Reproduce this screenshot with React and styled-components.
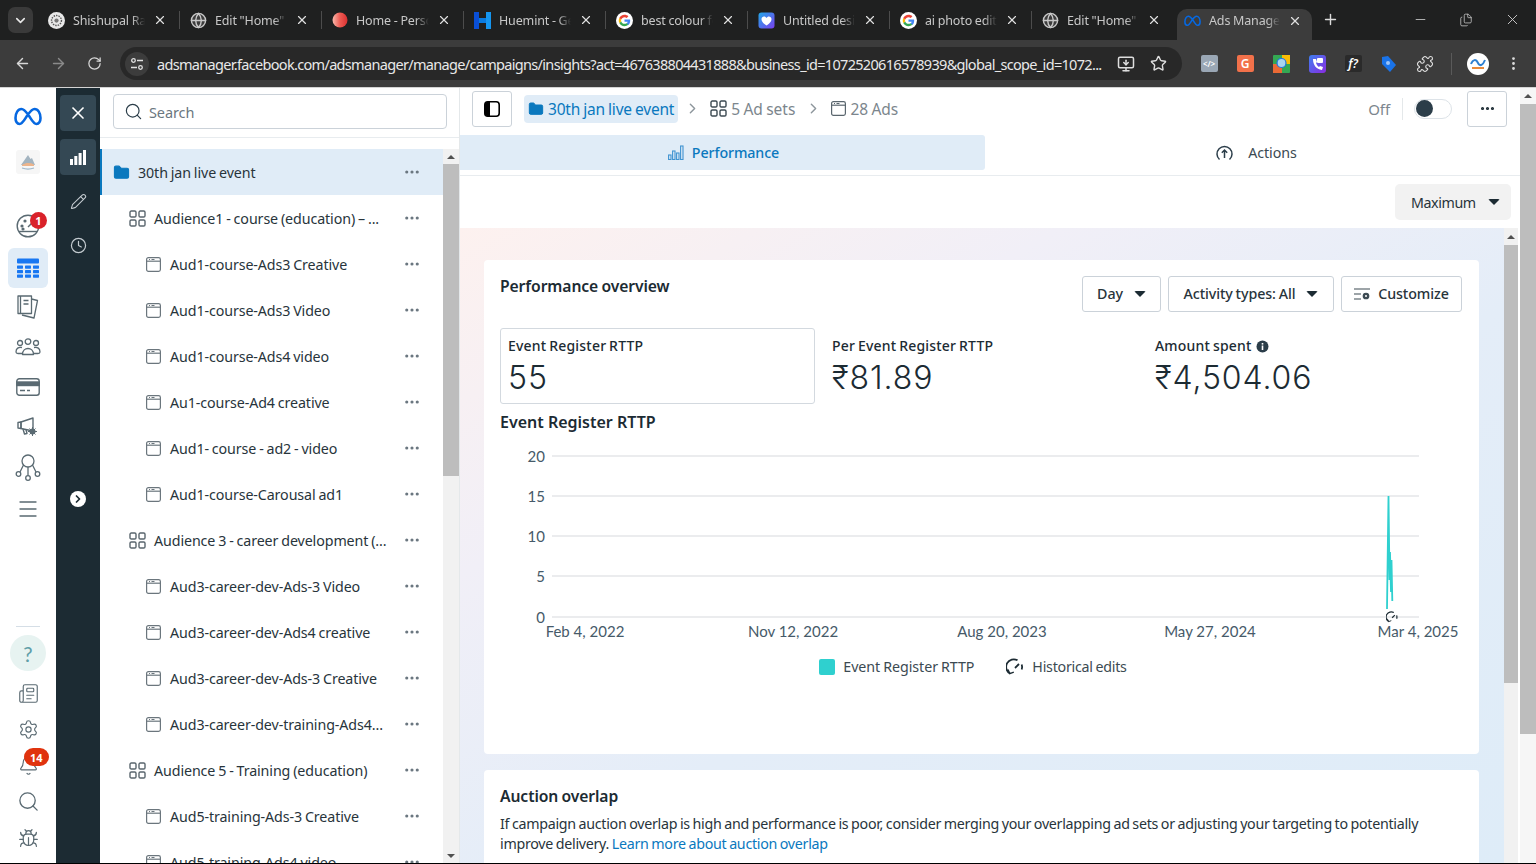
import React from 'react';
import styled, { createGlobalStyle } from 'styled-components';
import {
  X, Search, Pencil, Clock, ChevronRight, ChevronDown, MoreHorizontal, Star, ArrowLeft, ArrowRight,
  RotateCw, Plus, Minus, Menu, Newspaper, Settings, Bell, Bug, Puzzle, MoreVertical, Globe, Folder,
  Files, MonitorDown,
} from 'lucide-react';

const GlobalStyle = createGlobalStyle`
  html, body { margin: 0; padding: 0; background: #fff; overflow: hidden; }
  * { box-sizing: border-box; }
  body {
    font-family: "Noto Sans", "Open Sans", sans-serif;
    color: #1c2b33;
    letter-spacing: -0.1px;
    word-spacing: -0.7px;
  }
`;

const Page = styled.div`
  width: 1536px;
  height: 864px;
  display: flex;
  flex-direction: column;
  overflow: hidden;
  border-bottom: 1px solid #000;
`;

/* browser chrome */
const TabStrip = styled.div`
  height: 40px;
  flex: none;
  background: #1f2020;
  display: flex;
  align-items: flex-end;
  padding-left: 8px;
`;
const TabSearch = styled.div`
  width: 25px;
  height: 26px;
  margin: 0 8px 7px 0;
  border-radius: 7px;
  background: #3a3a3a;
  color: #e8e8e8;
  display: flex;
  align-items: center;
  justify-content: center;
`;
const Tab = styled.div`
  position: relative;
  width: ${p => (p.$active ? 135 : 142)}px;
  height: ${p => (p.$active ? 31 : 32)}px;
  margin-bottom: ${p => (p.$active ? 0 : '4px')};
  padding: 0 ${p => (p.$active ? 10 : 16)}px ${p => (p.$active ? 8 : 0)}px 7px;
  flex: none;
  display: flex;
  align-items: center;
  gap: 8px;
  color: #c8c8c8;
  background: ${p => (p.$active ? '#3c3c3c' : 'transparent')};
  border-radius: 10px 10px 0 0;
  &::after {
    content: '';
    display: ${p => (p.$last ? 'none' : 'block')};
    position: absolute;
    right: 3px;
    top: 7px;
    height: 18px;
    width: 1px;
    background: #4c4c4c;
  }
`;
const TabTitle = styled.span`
  flex: 1;
  min-width: 0;
  font-size: 12.5px;
  letter-spacing: -0.15px;
  word-spacing: -0.3px;
  white-space: nowrap;
  -webkit-mask-image: linear-gradient(90deg, #000 82%, transparent 100%);
  mask-image: linear-gradient(90deg, #000 82%, transparent 100%);
`;
const NewTab = styled.div`
  color: #dcdcdc;
  display: flex;
  margin: 0 0 12px 10px;
`;
const WindowButtons = styled.div`
  margin-left: auto;
  display: flex;
  align-items: center;
  color: #cfcfcf;
  margin-bottom: 12px;
  padding-right: 1px;
`;
const WindowButton = styled.div`
  width: 46px;
  display: flex;
  justify-content: center;
`;
const Toolbar = styled.div`
  height: 47px;
  flex: none;
  background: #3c3c3c;
  display: flex;
  align-items: center;
  padding-left: 4px;
  color: #d8d8d8;
`;
const NavButton = styled.div`
  width: 36px;
  display: flex;
  justify-content: center;
  color: ${p => (p.$dim ? '#8a8a8a' : '#d8d8d8')};
`;
const Omnibox = styled.div`
  width: 1062px;
  height: 33px;
  margin-left: 8px;
  border-radius: 17px;
  background: #282828;
  display: flex;
  align-items: center;
  padding: 0 15px 0 5px;
`;
const SiteBadge = styled.div`
  width: 24px;
  height: 24px;
  border-radius: 50%;
  background: #3c3c3c;
  display: flex;
  align-items: center;
  justify-content: center;
  margin-right: 8px;
  flex: none;
`;
const Url = styled.div`
  flex: 1;
  min-width: 0;
  font-size: 14.5px;
  letter-spacing: -0.68px;
  word-spacing: 0;
  color: #e8e8e8;
  white-space: nowrap;
  overflow: hidden;
`;
const OmniIcons = styled.div`
  display: flex;
  align-items: center;
  gap: 15px;
  margin-left: 12px;
  color: #dedede;
`;
const Extensions = styled.div`
  display: flex;
  align-items: center;
  margin-left: 9px;
`;
const ExtSlot = styled.div`
  width: 36px;
  display: flex;
  justify-content: center;
  align-items: center;
`;
const ExtTile = styled.div`
  width: 17px;
  height: 17px;
  border-radius: 2px;
  background: ${p => p.$bg};
  color: #fff;
  font-size: ${p => p.$size || 11}px;
  font-weight: 600;
  font-style: ${p => (p.$italic ? 'italic' : 'normal')};
  display: flex;
  align-items: center;
  justify-content: center;
`;
const ToolbarDivider = styled.div`
  width: 1px;
  height: 22px;
  margin: 0 15px 0 8px;
  background: #5a5a5a;
`;
const Avatar = styled.div`
  width: 22px;
  height: 22px;
  border-radius: 50%;
  background: #fff;
  margin-right: 16px;
  display: flex;
  align-items: center;
  justify-content: center;
`;

/* page */
const Body = styled.div`
  flex: 1;
  min-height: 0;
  display: flex;
  border-top: 1px solid #d4d4d4;
`;
const Rail = styled.div`
  width: 56px;
  flex: none;
  display: flex;
  flex-direction: column;
  align-items: center;
  color: #5a6a72;
`;
const RailSlot = styled.div`
  position: relative;
  width: 40px;
  height: ${p => p.$h || 40}px;
  margin-top: ${p => p.$mt || 0}px;
  display: flex;
  align-items: center;
  justify-content: center;
  flex: none;
  border-radius: 6px;
  background: ${p => (p.$active ? '#e0ecf7' : 'transparent')};
`;
const RailBottom = styled.div`
  margin-top: auto;
  padding-bottom: 6px;
  display: flex;
  flex-direction: column;
  align-items: center;
`;
const RailRule = styled.div`
  width: 24px;
  height: 1px;
  background: #d5dee6;
  margin-bottom: 8px;
`;
const HelpBubble = styled.div`
  width: 36px;
  height: 36px;
  margin-bottom: 4px;
  border-radius: 50%;
  background: #e7f3f1;
  color: #5f9ea8;
  font-family: Lato, sans-serif;
  font-size: 21px;
  line-height: 1;
  display: flex;
  align-items: center;
  justify-content: center;
`;
const Badge = styled.span`
  position: absolute;
  top: ${p => p.$top}px;
  left: ${p => p.$left}px;
  height: ${p => (p.$wide ? 18 : 17)}px;
  min-width: 17px;
  padding: 0 ${p => (p.$wide ? 6 : 0)}px;
  border-radius: 9px;
  background: ${p => (p.$wide ? '#e0330e' : '#d9222a')};
  color: #fff;
  font-size: 11px;
  font-weight: 700;
  letter-spacing: 0;
  display: flex;
  align-items: center;
  justify-content: center;
`;
const DarkRail = styled.div`
  width: 44px;
  flex: none;
  background: #1c2b33;
  display: flex;
  flex-direction: column;
  align-items: center;
  padding-top: 7px;
  gap: 8px;
  color: #c4cbd0;
`;
const DarkButton = styled.div`
  width: 36px;
  height: 36px;
  border-radius: 4px;
  background: ${p => (p.$on ? '#344854' : 'transparent')};
  color: ${p => (p.$on ? '#fff' : '#c4cbd0')};
  display: flex;
  align-items: center;
  justify-content: center;
`;
const ExpandDot = styled.div`
  width: 16px;
  height: 16px;
  margin-top: 220px;
  border-radius: 50%;
  background: #fff;
  color: #1c2b33;
  display: flex;
  align-items: center;
  justify-content: center;
`;

/* campaign tree */
const TreePanel = styled.div`
  width: 360px;
  flex: none;
  display: flex;
  flex-direction: column;
  border-right: 1px solid #e4e8ea;
`;
const SearchRow = styled.div`
  height: 50px;
  flex: none;
  padding: 6px 12px 0 13px;
  border-bottom: 1px solid #e8ecef;
`;
const SearchBox = styled.div`
  height: 35px;
  border: 1px solid #cbd2d9;
  border-radius: 4px;
  display: flex;
  align-items: center;
  gap: 6px;
  padding-left: 10px;
  font-size: 14.5px;
  color: #6b7780;
`;
const TreeBody = styled.div`
  flex: 1;
  min-height: 0;
  margin-top: 11px;
  display: flex;
`;
const TreeList = styled.div`
  flex: 1;
  min-width: 0;
  overflow: hidden;
`;
const TreeRow = styled.div`
  height: 46px;
  flex: none;
  display: flex;
  align-items: center;
  padding-left: ${p => [11, 29, 46][p.$level]}px;
  padding-right: 22px;
  gap: ${p => [8, 8, 9][p.$level]}px;
  font-size: 14.25px;
  color: #28343b;
  background: ${p => (p.$active ? '#e0ecf7' : 'transparent')};
  border-left: ${p => (p.$active ? '2px solid #0a78be' : '0')};
`;
const TreeLabel = styled.span`
  flex: 1;
  white-space: nowrap;
`;
const RowDots = styled.span`
  display: flex;
  color: #6b7780;
`;
const ScrollTrack = styled.div`
  width: ${p => p.$w}px;
  flex: none;
  background: ${p => p.$bg || '#f1f1f1'};
  display: flex;
  flex-direction: column;
  align-items: center;
`;
const ScrollArrow = styled.div`
  height: ${p => p.$h || 15}px;
  flex: none;
  display: flex;
  align-items: center;
  &::before {
    content: '';
    border-left: 4px solid transparent;
    border-right: 4px solid transparent;
    ${p => (p.$down ? 'border-top' : 'border-bottom')}: 4px solid #505050;
  }
`;
const ScrollThumb = styled.div`
  width: 100%;
  height: ${p => p.$h}px;
  flex: none;
  background: #bdbdbd;
`;
const ScrollFill = styled.div`
  flex: 1;
`;

/* main column */
const Main = styled.div`
  flex: 1;
  min-width: 0;
  display: flex;
  flex-direction: column;
`;
const Header = styled.div`
  height: 47px;
  flex: none;
  display: flex;
  align-items: center;
  padding: 0 13px 6px 12px;
`;
const SquareButton = styled.div`
  width: 40px;
  height: 36px;
  border: 1px solid #cbd2d9;
  border-radius: 3px;
  display: flex;
  align-items: center;
  justify-content: center;
  color: #1c2b33;
`;
const Crumb = styled.div`
  height: 28px;
  display: flex;
  align-items: center;
  gap: 4px;
  padding: 0 4px;
  font-size: 15.500px;
  letter-spacing: ${p => (p.$active ? '-0.2px' : '0')};
  border-radius: 4px;
  color: ${p => (p.$active ? '#0a78be' : '#7c868d')};
  background: ${p => (p.$active ? '#e0ecf7' : 'transparent')};
  margin-left: ${p => p.$ml || 0}px;
`;
const CrumbArrow = styled.span`
  display: flex;
  color: #8d969c;
  margin-left: 6px;
  margin-right: 5px;
`;
const HeaderRight = styled.div`
  margin-left: auto;
  display: flex;
  align-items: center;
`;
const OffLabel = styled.span`
  font-size: 15px;
  color: #7c868d;
  padding-right: 12px;
  border-right: 1px solid #e4e8ea;
  line-height: 22px;
`;
const Toggle = styled.div`
  width: 38px;
  height: 20px;
  margin: 0 15px 0 11px;
  border: 1px solid #dde3e8;
  border-radius: 10px;
  display: flex;
  align-items: center;
  padding-left: 1px;
  &::before {
    content: '';
    width: 17px;
    height: 17px;
    border-radius: 50%;
    background: #2b3d49;
  }
`;
const ViewTabs = styled.div`
  height: 41px;
  flex: none;
  display: flex;
  border-bottom: 1px solid #e8ecef;
  padding-bottom: 5px;
`;
const ViewTab = styled.div`
  width: ${p => (p.$active ? '525px' : 'auto')};
  flex: ${p => (p.$active ? 'none' : 1)};
  display: flex;
  align-items: center;
  justify-content: center;
  gap: ${p => (p.$active ? 8 : 15)}px;
  padding-left: ${p => (p.$active ? '2px' : '8px')};
  font-size: 14.25px;
  font-weight: ${p => (p.$active ? 500 : 400)};
  color: ${p => (p.$active ? '#0a78be' : '#3c4a52')};
  background: ${p => (p.$active ? '#e0ecf7' : 'transparent')};
  border-radius: 0 3px 3px 0;
`;
const FilterRow = styled.div`
  height: 52px;
  flex: none;
  display: flex;
  align-items: center;
  justify-content: flex-end;
  padding-right: 9px;
`;
const GreyDropdown = styled.div`
  width: 116px;
  height: 36px;
  background: #f2f2f2;
  border-radius: 5px;
  display: flex;
  align-items: center;
  justify-content: space-between;
  padding: 0 11px 0 16px;
  font-size: 14.25px;
  letter-spacing: -0.4px;
  color: #28343b;
`;
const Caret = styled.span`
  display: inline-block;
  width: 0;
  height: 0;
  border-left: 6px solid transparent;
  border-right: 6px solid transparent;
  border-top: 6px solid #1c2b33;
  border-radius: 2px;
`;
const ContentRow = styled.div`
  flex: 1;
  min-height: 0;
  display: flex;
  padding-right: 2px;
`;
const Backdrop = styled.div`
  flex: 1;
  min-width: 0;
  padding: 32px 25px 0 24px;
  display: flex;
  flex-direction: column;
  gap: 16px;
  overflow: hidden;
  background: linear-gradient(150deg, #fdf1ef 0%, #f1eff7 28%, #e4edf8 55%, #deecf8 100%);
`;
const Card = styled.div`
  flex: none;
  height: ${p => (p.$h ? `${p.$h}px` : 'auto')};
  background: #fff;
  border-radius: 4px;
  padding: 16px 17px 16px 16px;
`;
const CardHead = styled.div`
  height: 36px;
  display: flex;
  align-items: flex-start;
  justify-content: space-between;
`;
const CardTitle = styled.div`
  font-size: 15.700px;
  font-weight: 600;
  line-height: 20px;
  color: #1c2b33;
`;
const HeadButtons = styled.div`
  display: flex;
  gap: 7px;
`;
const OutlineButton = styled.div`
  height: 36px;
  width: ${p => p.$w}px;
  border: 1px solid #cbd2d9;
  border-radius: 3px;
  display: flex;
  align-items: center;
  justify-content: center;
  gap: ${p => p.$gap || 11}px;
  padding-bottom: 1px;
  font-size: 14.25px;
  font-weight: 500;
  color: #28343b;
`;
const KpiGrid = styled.div`
  margin-top: 16px;
  display: grid;
  grid-template-columns: 315px 314px 1fr;
  gap: 9px;
`;
const Kpi = styled.div`
  height: 76px;
  padding: ${p => (p.$on ? '8px 7px' : '9px 8px')};
  border: ${p => (p.$on ? '1px solid #d3d9df' : '0')};
  border-radius: 3px;
`;
const KpiLabel = styled.div`
  display: flex;
  align-items: center;
  gap: 4px;
  font-size: 14px;
  font-weight: 500;
  line-height: 18px;
  letter-spacing: 0.2px;
  word-spacing: -1px;
  color: #1c2b33;
`;
const KpiValue = styled.div`
  margin-top: 3px;
  font-family: Inter, "Noto Sans", sans-serif;
  font-size: 32px;
  font-weight: 300;
  line-height: 40px;
  letter-spacing: 0.9px;
  color: #1c2b33;
`;
const ChartTitle = styled(CardTitle)`
  margin-top: 8px;
  font-size: 16px;
  letter-spacing: 0;
  word-spacing: 0;
`;
const ChartSvg = styled.svg`
  display: block;
  width: 963px;
  height: 204px;
  margin-top: 8px;
`;
const AxisText = styled.text`
  font-family: Lato, "Open Sans", sans-serif;
  font-size: 15px;
  letter-spacing: 0;
  word-spacing: 0;
  fill: #465a69;
`;
const Legend = styled.div`
  display: flex;
  justify-content: center;
  gap: 32px;
  margin-top: 13px;
  padding-right: 16px;
`;
const LegendItem = styled.div`
  display: flex;
  align-items: center;
  gap: ${p => p.$gap}px;
  font-size: 14.25px;
  letter-spacing: ${p => p.$ls}px;
  color: #3c4a52;
`;
const Swatch = styled.span`
  width: 16px;
  height: 16px;
  border-radius: 2px;
  background: #2fd0cf;
`;
const Paragraph = styled.div`
  margin-top: 8px;
  font-size: 14.25px;
  line-height: 20px;
  letter-spacing: -0.28px;
  color: #28343b;
`;
const LinkText = styled.span`
  color: #0a78be;
`;

/* drawings */
const MetaLogo = ({ w = 28 }) => (
  <svg width={w} height={w * 0.68} viewBox="0 0 28 19" fill="none" stroke="#0668e1" strokeWidth="2.600" style={{ flex: 'none' }}>
    <path d="M7.500 2C4 2 1.500 6 1.500 11c0 3.500 1.600 6 4 6 3.500 0 6-6.500 8.500-9.500C16.500 4 18 2 20.500 2c3.500 0 6 4 6 9 0 3.500-1.600 6-4 6-3.500 0-6-6.500-8.500-9.500C11.500 4 10 2 7.500 2z" />
  </svg>
);
const GoogleIcon = () => (
  <svg width="17" height="17" viewBox="0 0 24 24" style={{ flex: 'none' }}>
    <circle cx="12" cy="12" r="12" fill="#fff" />
    <path d="M20 12.200c0-.6-.1-1.200-.2-1.700H12v3.300h4.500c-.2 1-.8 1.900-1.700 2.500l2.700 2.100c1.600-1.500 2.500-3.600 2.500-6.200z" fill="#4285f4" />
    <path d="M12 20c2.200 0 4-.7 5.500-2l-2.700-2.100c-.7.5-1.700.8-2.800.8-2.100 0-3.900-1.400-4.600-3.400L4.600 15.500C5.900 18.200 8.700 20 12 20z" fill="#34a853" />
    <path d="M7.400 13.300c-.4-1-.4-1.800 0-2.600L4.600 8.500c-.9 1.900-.9 5 0 7z" fill="#fbbc05" />
    <path d="M12 7.300c1.200 0 2.300.4 3.100 1.200l2.400-2.400C16 4.800 14.200 4 12 4 8.700 4 5.900 5.800 4.600 8.500l2.800 2.200C8.100 8.700 9.900 7.300 12 7.300z" fill="#ea4335" />
  </svg>
);
const AccountIcon = () => (
  <svg width="17" height="17" viewBox="0 0 24 24" fill="none" style={{ flex: 'none' }}>
    <circle cx="12" cy="12" r="12" fill="#e8e8e8" />
    <circle cx="12" cy="12" r="7" stroke="#555" strokeWidth="2" strokeDasharray="2 1.500" />
    <circle cx="12" cy="12" r="3" fill="#777" />
  </svg>
);
const RedDot = () => (
  <svg width="16" height="16" viewBox="0 0 16 16" style={{ flex: 'none' }}>
    <defs>
      <linearGradient id="redDot" x1="0" x2="1">
        <stop offset="0" stopColor="#f9b9ac" />
        <stop offset="0.5" stopColor="#ee5a52" />
        <stop offset="1" stopColor="#d93030" />
      </linearGradient>
    </defs>
    <circle cx="8" cy="8" r="7.500" fill="url(#redDot)" />
  </svg>
);
const HuemintIcon = () => (
  <svg width="17" height="17" viewBox="0 0 17 17" style={{ flex: 'none' }}>
    <rect x="0" y="0" width="5" height="17" fill="#0a4fd6" />
    <rect x="12" y="0" width="5" height="17" fill="#1596f0" />
    <rect x="5" y="6" width="7" height="5" fill="#0a7be0" />
  </svg>
);
const CanvaHeart = () => (
  <svg width="17" height="17" viewBox="0 0 17 17" style={{ flex: 'none' }}>
    <defs>
      <linearGradient id="canvaHeart" x1="0" y1="0" x2="1" y2="1">
        <stop offset="0" stopColor="#22a8e8" />
        <stop offset="1" stopColor="#7a3ff0" />
      </linearGradient>
    </defs>
    <rect x="0.500" y="0.500" width="16" height="16" rx="3" fill="url(#canvaHeart)" />
    <path d="M8.500 13.500C4 10.500 3.500 8.500 3.500 7c0-3 4-3.500 5-1 1-2.500 5-2 5 1 0 1.500-.5 3.500-5 6.500z" fill="#fff" />
  </svg>
);
const SitePrefs = () => (
  <svg width="14" height="14" viewBox="0 0 14 14" fill="none" stroke="#e0e0e0" strokeWidth="1.300">
    <circle cx="3.500" cy="3.500" r="1.800" />
    <path d="M7 3.500h6M1 10.500h6" />
    <circle cx="10.500" cy="10.500" r="1.800" />
  </svg>
);
const MapTile = () => (
  <svg width="17" height="18" viewBox="0 0 17 18">
    <rect width="17" height="18" rx="1" fill="#34a853" />
    <rect x="9" width="8" height="9" fill="#fbbc05" />
    <rect x="0" y="9" width="9" height="9" fill="#ea6a35" />
    <circle cx="8.500" cy="8" r="4.500" fill="#a8d4f0" stroke="#1a73e8" strokeWidth="1.200" />
  </svg>
);
const PhoneTile = () => (
  <svg width="17" height="18" viewBox="0 0 17 18">
    <defs>
      <linearGradient id="phoneTile" x1="0" y1="0" x2="1" y2="1">
        <stop offset="0" stopColor="#3d7ff0" />
        <stop offset="1" stopColor="#8a2be2" />
      </linearGradient>
    </defs>
    <rect width="17" height="18" rx="3" fill="url(#phoneTile)" />
    <rect x="8" y="3" width="6" height="5" rx="1" fill="#fff" />
    <path d="M4 4c0 6 3 10 9 11l1-3-3-1-1 1c-1.500-1-2.500-2.500-3-4l1-1-1-3z" fill="#fff" />
  </svg>
);
const TagTile = () => (
  <svg width="16" height="18" viewBox="0 0 16 18">
    <path d="M1 2l6-1 8 9-6 7-8-8z" fill="#1a73e8" />
    <circle cx="7" cy="8" r="2" fill="#9cc3f5" />
  </svg>
);
const AvatarMark = () => (
  <svg width="18" height="14" viewBox="0 0 18 14" fill="none">
    <path d="M2 7c2-5 5-5 7-1s5 2 7-3" stroke="#2f80d0" strokeWidth="2" />
    <path d="M3 11h12" stroke="#e98a3a" strokeWidth="2" />
  </svg>
);
const GaugeFace = () => (
  <svg width="24" height="24" viewBox="0 0 24 24" fill="none" stroke="#5a6a72" strokeWidth="1.400">
    <circle cx="12" cy="12" r="10.800" />
    <path d="M3 17.500h18" />
    <path d="M12 13l5-5" />
    <circle cx="6" cy="12" r=".9" fill="#5a6a72" />
    <circle cx="9" cy="7" r=".9" fill="#5a6a72" />
    <circle cx="7" cy="15" r=".9" fill="#5a6a72" />
  </svg>
);
const TableIcon = () => (
  <svg width="24" height="21" viewBox="0 0 24 21" fill="#1877f2">
    <rect x="1" y="0.500" width="22" height="5" rx="1" />
    {[7.5, 12, 16.5].map(y => [1, 9, 17].map(x => (
      <rect key={`${x}-${y}`} x={x} y={y} width="6" height="3.200" rx=".6" />
    )))}
  </svg>
);
const LogoTile = () => (
  <svg width="24" height="24" viewBox="0 0 24 24">
    <rect width="24" height="24" rx="3" fill="#f6f6f6" />
    <path d="M5 15L12 5l2.500 4 1.500-1 3 7z" fill="#a3b4c0" />
    <path d="M6 15c4-2.500 8-2.500 12-.5v1.500H6z" fill="#ecb48c" />
    <path d="M6 18c4 1.500 8 1.500 12 0" fill="none" stroke="#9fb8cc" strokeWidth="1.200" />
  </svg>
);
const PagesIcon = () => (
  <svg width="26" height="26" viewBox="0 0 26 26" fill="none" stroke="#5a6a72" strokeWidth="1.300" strokeLinejoin="round">
    <path d="M3 2h13.500v17.500H3z" />
    <path d="M5.500 2v17.500" />
    <path d="M8.500 6.500h5M8.500 10h5" />
    <path d="M16.500 5l6 1.500-3.500 17.500-12-3" />
  </svg>
);
const PeopleIcon = () => (
  <svg width="26" height="18" viewBox="0 0 26 18" fill="none" stroke="#5a6a72" strokeWidth="1.300">
    <circle cx="13" cy="3.600" r="2.800" />
    <circle cx="5" cy="5" r="2.500" />
    <circle cx="21" cy="5" r="2.500" />
    <path d="M7.500 16.500c0-8 11-8 11 0z" strokeLinejoin="round" />
    <path d="M7 9.500c-3.500-.8-6 1-6 4.500 0 1.200 1 1.500 2 1.500h4" />
    <path d="M19 9.500c3.500-.8 6 1 6 4.500 0 1.200-1 1.500-2 1.500h-4" />
  </svg>
);
const CardIcon = () => (
  <svg width="24" height="18" viewBox="0 0 24 18" fill="none" stroke="#5a6a72" strokeWidth="1.400">
    <rect x=".8" y=".8" width="22.400" height="16.400" rx="2.500" />
    <rect x=".8" y="4" width="22.400" height="3.500" fill="#5a6a72" />
    <path d="M4 12.500h5M11 12.500h3" />
  </svg>
);
const MegaphoneIcon = () => (
  <svg width="22" height="20" viewBox="0 0 22 20" fill="none" stroke="#5a6a72" strokeWidth="1.400" strokeLinejoin="round">
    <path d="M1 5.500v5.500l3 .5V5z" />
    <path d="M4 5l12-4v13L4 11.500z" />
    <path d="M6 12l1.500 5 2.500-.5-1-4" />
    <circle cx="15.500" cy="14.500" r="3" fill="#5a6a72" stroke="none" />
    <path d="M15.500 10v9M11 14.500h9M12.500 11.500l6 6M18.500 11.500l-6 6" strokeWidth="1" />
  </svg>
);
const NodesIcon = () => (
  <svg width="26" height="27" viewBox="0 0 26 27" fill="none" stroke="#5a6a72" strokeWidth="1.300">
    <circle cx="13" cy="7" r="6" />
    <circle cx="3.500" cy="20" r="2.300" />
    <circle cx="13" cy="24" r="2.300" />
    <circle cx="22.500" cy="20" r="2.300" />
    <path d="M13 13v8.500M8.500 11L5 18M17.500 11l3.500 7" />
  </svg>
);
const DarkBars = () => (
  <svg width="16" height="15" viewBox="0 0 16 15" fill="#fff">
    <rect x="0" y="9" width="3" height="6" />
    <rect x="4.300" y="6" width="3" height="9" />
    <rect x="8.600" y="3" width="3" height="12" />
    <rect x="13" y="0" width="3" height="15" />
  </svg>
);
const AdSetIcon = ({ color = '#5a666e', size = 17 }) => (
  <svg width={size} height={size} viewBox="0 0 17 17" fill="none" stroke={color} strokeWidth="1.400" style={{ flex: 'none' }}>
    <rect x="1" y="1" width="6" height="6" rx="1.300" />
    <rect x="10" y="1" width="6" height="6" rx="1.300" />
    <rect x="1" y="10" width="6" height="6" rx="1.300" />
    <rect x="10" y="10" width="6" height="6" rx="1.300" />
  </svg>
);
const AdIcon = ({ color = '#6b767d', size = 15 }) => (
  <svg width={size} height={size} viewBox="0 0 15 15" fill="none" stroke={color} strokeWidth="1.200" style={{ flex: 'none' }}>
    <rect x=".6" y=".6" width="13.800" height="13.800" rx="1.800" />
    <path d="M.6 4.200h13.800" />
    <path d="M3 2.500h1M5.500 2.500h3" strokeWidth="1" />
  </svg>
);
const SolidFolder = ({ size = 17 }) => (
  <Folder size={size} fill="#0a78be" color="#0a78be" strokeWidth={1.500} style={{ flex: 'none' }} />
);
const PanelIcon = () => (
  <svg width="16" height="16" viewBox="0 0 16 16">
    <rect x=".8" y=".8" width="14.400" height="14.400" rx="3" fill="none" stroke="#000" strokeWidth="1.600" />
    <path d="M3 1h3v14H3a2 2 0 0 1-2-2V3a2 2 0 0 1 2-2z" fill="#000" />
  </svg>
);
const OutlineBars = () => (
  <svg width="16" height="15" viewBox="0 0 16 15" fill="none" stroke="#3f93d1" strokeWidth="1.100">
    <rect x=".6" y="10" width="2.400" height="4.500" />
    <rect x="4.600" y="6" width="2.400" height="8.500" />
    <rect x="8.600" y="8" width="2.400" height="6.500" />
    <rect x="12.600" y="1" width="2.400" height="13.500" />
  </svg>
);
const ActionsIcon = () => (
  <svg width="17" height="16" viewBox="0 0 17 16" fill="none" stroke="#2b3d49" strokeWidth="1.500">
    <path d="M3.500 14.500a7.500 7.500 0 1 1 10 0" />
    <path d="M8.500 13V5M5.800 7.700l2.700-2.700 2.700 2.700" />
  </svg>
);
const CustomizeIcon = () => (
  <svg width="17" height="14" viewBox="0 0 17 14" fill="none" stroke="#3c4a52" strokeWidth="1.100">
    <path d="M0 2h16M0 7h7M0 12h7" />
    <circle cx="12" cy="9" r="2.800" fill="#3c4a52" />
    <circle cx="12" cy="9" r="1" fill="#fff" stroke="none" />
  </svg>
);
const HistoryGauge = ({ size = 18 }) => (
  <svg width={size} height={size} viewBox="0 0 18 18" fill="none" stroke="#1c2b33" strokeWidth="1.800">
    <path d="M4 15.500A7.500 7.500 0 0 1 11.500 2.300" />
    <path d="M2 11.500l1.800 4.200 4-1.500" strokeWidth="1.400" />
    <path d="M15.700 6.500a7.500 7.500 0 0 1 0 5" />
    <path d="M9 10l4-4" />
  </svg>
);
const InfoDot = () => (
  <svg width="13" height="13" viewBox="0 0 13 13">
    <circle cx="6.500" cy="6.500" r="6" fill="#2b3d49" />
    <rect x="5.700" y="5.500" width="1.600" height="4.500" fill="#fff" />
    <rect x="5.700" y="3" width="1.600" height="1.600" fill="#fff" />
  </svg>
);

const tabs = [
  { title: 'Shishupal Rar', icon: <AccountIcon /> },
  { title: 'Edit "Home" v', icon: <Globe size={17} color="#c8c8c8" fill="#3c3c3c" style={{ flex: 'none' }} /> },
  { title: 'Home - Perso', icon: <RedDot /> },
  { title: 'Huemint - Ge', icon: <HuemintIcon /> },
  { title: 'best colour fc', icon: <GoogleIcon /> },
  { title: 'Untitled desic', icon: <CanvaHeart /> },
  { title: 'ai photo editc', icon: <GoogleIcon /> },
  { title: 'Edit "Home" v', icon: <Globe size={17} color="#c8c8c8" fill="#3c3c3c" style={{ flex: 'none' }} /> },
  { title: 'Ads Manager', icon: <MetaLogo w={17} />, active: true },
];

const treeRows = [
  { level: 0, label: '30th jan live event', active: true },
  { level: 1, label: 'Audience1 - course (education) – ...' },
  { level: 2, label: 'Aud1-course-Ads3 Creative' },
  { level: 2, label: 'Aud1-course-Ads3 Video' },
  { level: 2, label: 'Aud1-course-Ads4 video' },
  { level: 2, label: 'Au1-course-Ad4 creative' },
  { level: 2, label: 'Aud1- course - ad2 - video' },
  { level: 2, label: 'Aud1-course-Carousal ad1' },
  { level: 1, label: 'Audience 3 - career development (...' },
  { level: 2, label: 'Aud3-career-dev-Ads-3 Video' },
  { level: 2, label: 'Aud3-career-dev-Ads4 creative' },
  { level: 2, label: 'Aud3-career-dev-Ads-3 Creative' },
  { level: 2, label: 'Aud3-career-dev-training-Ads4...' },
  { level: 1, label: 'Audience 5 - Training (education)' },
  { level: 2, label: 'Aud5-training-Ads-3 Creative' },
  { level: 2, label: 'Aud5-training-Ads4 video' },
];

const rowIcons = [<SolidFolder />, <AdSetIcon />, <AdIcon />];

const yTicks = [
  { label: '20', y: 456 },
  { label: '15', y: 496 },
  { label: '10', y: 536 },
  { label: '5', y: 576 },
  { label: '0', y: 617 },
];
const xTicks = [
  { label: 'Feb 4, 2022', x: 585 },
  { label: 'Nov 12, 2022', x: 793 },
  { label: 'Aug 20, 2023', x: 1002 },
  { label: 'May 27, 2024', x: 1210 },
  { label: 'Mar 4, 2025', x: 1418 },
];

function Chart() {
  return (
    <ChartSvg viewBox="500 440 963 204">
      {yTicks.map(t => (
        <g key={t.label}>
          <line x1="552" x2="1419" y1={t.y} y2={t.y} stroke="#e4e6e8" strokeWidth="1.500" />
          <AxisText x="545" y={t.y + 5.500} textAnchor="end">{t.label}</AxisText>
        </g>
      ))}
      {xTicks.map(t => (
        <AxisText key={t.label} x={t.x} y="636.500" textAnchor="middle">{t.label}</AxisText>
      ))}
      <polyline
        points="1387,609 1388.500,496 1389.500,580 1390,552 1391,592 1391.500,560 1392.300,601"
        fill="none"
        stroke="#2fd0cf"
        strokeWidth="1.800"
      />
      <g transform="translate(1386 611) scale(0.680)">
        <HistoryGauge />
      </g>
    </ChartSvg>
  );
}

export default function App() {
  return (
    <Page>
      <GlobalStyle />
      <TabStrip>
        <TabSearch><ChevronDown size={15} strokeWidth={2.500} /></TabSearch>
        {tabs.map((t, i) => (
          <Tab key={i} $active={t.active} $last={t.active || i === 7}>
            {t.icon}
            <TabTitle>{t.title}</TabTitle>
            <X size={14} strokeWidth={2} color="#e0e0e0" style={{ flex: 'none' }} />
          </Tab>
        ))}
        <NewTab><Plus size={17} /></NewTab>
        <WindowButtons>
          <WindowButton><Minus size={15} strokeWidth={1.300} /></WindowButton>
          <WindowButton><Files size={14} strokeWidth={1.300} /></WindowButton>
          <WindowButton><X size={17} strokeWidth={1.300} /></WindowButton>
        </WindowButtons>
      </TabStrip>
      <Toolbar>
        <NavButton><ArrowLeft size={17} /></NavButton>
        <NavButton $dim><ArrowRight size={17} /></NavButton>
        <NavButton><RotateCw size={15} /></NavButton>
        <Omnibox>
          <SiteBadge><SitePrefs /></SiteBadge>
          <Url>adsmanager.facebook.com/adsmanager/manage/campaigns/insights?act=467638804431888&amp;business_id=1072520616578939&amp;global_scope_id=1072...</Url>
          <OmniIcons>
            <MonitorDown size={18} />
            <Star size={17} />
          </OmniIcons>
        </Omnibox>
        <Extensions>
          <ExtSlot><ExtTile $bg="#9aa7b5" $size={8}>&lt;/&gt;</ExtTile></ExtSlot>
          <ExtSlot><ExtTile $bg="#f2714a" $size={12}>G</ExtTile></ExtSlot>
          <ExtSlot><MapTile /></ExtSlot>
          <ExtSlot><PhoneTile /></ExtSlot>
          <ExtSlot><ExtTile $bg="#2a2a2a" $size={12} $italic>f?</ExtTile></ExtSlot>
          <ExtSlot><TagTile /></ExtSlot>
          <ExtSlot><Puzzle size={18} strokeWidth={1.500} color="#e0e0e0" /></ExtSlot>
          <ToolbarDivider />
          <Avatar><AvatarMark /></Avatar>
          <MoreVertical size={17} color="#dcdcdc" />
        </Extensions>
      </Toolbar>
      <Body>
        <Rail>
          <RailSlot $h={57}><MetaLogo /></RailSlot>
          <RailSlot $h={34}><LogoTile /></RailSlot>
          <RailSlot $mt={27}>
            <GaugeFace />
            <Badge $top={6} $left={22}>1</Badge>
          </RailSlot>
          <RailSlot $mt={2} $active><TableIcon /></RailSlot>
          <RailSlot $h={38}><PagesIcon /></RailSlot>
          <RailSlot $mt={1}><PeopleIcon /></RailSlot>
          <RailSlot><CardIcon /></RailSlot>
          <RailSlot><MegaphoneIcon /></RailSlot>
          <RailSlot><NodesIcon /></RailSlot>
          <RailSlot $mt={2}><Menu size={24} strokeWidth={1.300} /></RailSlot>
          <RailBottom>
            <RailRule />
            <HelpBubble>?</HelpBubble>
            <RailSlot $h={36}><Newspaper size={21} strokeWidth={1.300} /></RailSlot>
            <RailSlot $h={36}><Settings size={21} strokeWidth={1.300} /></RailSlot>
            <RailSlot $h={36}>
              <Bell size={21} strokeWidth={1.300} />
              <Badge $top={1} $left={16} $wide>14</Badge>
            </RailSlot>
            <RailSlot $h={36}><Search size={23} strokeWidth={1.400} /></RailSlot>
            <RailSlot $h={38}><Bug size={21} strokeWidth={1.400} /></RailSlot>
          </RailBottom>
        </Rail>
        <DarkRail>
          <DarkButton $on><X size={20} strokeWidth={2} /></DarkButton>
          <DarkButton $on><DarkBars /></DarkButton>
          <DarkButton><Pencil size={17} strokeWidth={1.500} /></DarkButton>
          <DarkButton><Clock size={17} strokeWidth={1.700} /></DarkButton>
          <ExpandDot><ChevronRight size={12} strokeWidth={3.500} /></ExpandDot>
        </DarkRail>
        <TreePanel>
          <SearchRow>
            <SearchBox>
              <Search size={19} strokeWidth={1.500} color="#2b3d49" />
              Search
            </SearchBox>
          </SearchRow>
          <TreeBody>
            <TreeList>
              {treeRows.map(r => (
                <TreeRow key={r.label} $level={r.level} $active={r.active}>
                  {rowIcons[r.level]}
                  <TreeLabel>{r.label}</TreeLabel>
                  <RowDots><MoreHorizontal size={18} strokeWidth={2.200} /></RowDots>
                </TreeRow>
              ))}
            </TreeList>
            <ScrollTrack $w={16}>
              <ScrollArrow />
              <ScrollThumb $h={312} />
              <ScrollFill />
              <ScrollArrow $down />
            </ScrollTrack>
          </TreeBody>
        </TreePanel>
        <Main>
          <Header>
            <SquareButton><PanelIcon /></SquareButton>
            <Crumb $active $ml={12}><SolidFolder size={16} />30th jan live event</Crumb>
            <CrumbArrow><ChevronRight size={17} /></CrumbArrow>
            <Crumb><AdSetIcon color="#3c4a52" />5 Ad sets</Crumb>
            <CrumbArrow><ChevronRight size={17} /></CrumbArrow>
            <Crumb><AdIcon color="#5a666e" />28 Ads</Crumb>
            <HeaderRight>
              <OffLabel>Off</OffLabel>
              <Toggle />
              <SquareButton><MoreHorizontal size={17} strokeWidth={2.500} /></SquareButton>
            </HeaderRight>
          </Header>
          <ViewTabs>
            <ViewTab $active><OutlineBars />Performance</ViewTab>
            <ViewTab><ActionsIcon />Actions</ViewTab>
          </ViewTabs>
          <FilterRow>
            <GreyDropdown>Maximum <Caret /></GreyDropdown>
          </FilterRow>
          <ContentRow>
            <Backdrop>
              <Card $h={494}>
                <CardHead>
                  <CardTitle>Performance overview</CardTitle>
                  <HeadButtons>
                    <OutlineButton $w={79}>Day <Caret /></OutlineButton>
                    <OutlineButton $w={166}>Activity types: All <Caret /></OutlineButton>
                    <OutlineButton $w={121} $gap={7}><CustomizeIcon />Customize</OutlineButton>
                  </HeadButtons>
                </CardHead>
                <KpiGrid>
                  <Kpi $on>
                    <KpiLabel>Event Register RTTP</KpiLabel>
                    <KpiValue>55</KpiValue>
                  </Kpi>
                  <Kpi>
                    <KpiLabel>Per Event Register RTTP</KpiLabel>
                    <KpiValue>₹81.89</KpiValue>
                  </Kpi>
                  <Kpi>
                    <KpiLabel>Amount spent <InfoDot /></KpiLabel>
                    <KpiValue>₹4,504.06</KpiValue>
                  </Kpi>
                </KpiGrid>
                <ChartTitle>Event Register RTTP</ChartTitle>
                <Chart />
                <Legend>
                  <LegendItem $gap={8} $ls={-0.05}><Swatch />Event Register RTTP</LegendItem>
                  <LegendItem $gap={8} $ls={-0.25}><HistoryGauge />Historical edits</LegendItem>
                </Legend>
              </Card>
              <Card>
                <CardTitle>Auction overlap</CardTitle>
                <Paragraph>
                  If campaign auction overlap is high and performance is poor, consider merging your overlapping ad sets or adjusting your targeting to potentially improve delivery. <LinkText>Learn more about auction overlap</LinkText>
                </Paragraph>
              </Card>
            </Backdrop>
            <ScrollTrack $w={14}>
              <ScrollArrow $h={17} />
              <ScrollThumb $h={438} />
              <ScrollFill />
            </ScrollTrack>
          </ContentRow>
        </Main>
        <ScrollTrack $w={16} $bg="#f6f6f6">
          <ScrollArrow $h={16} />
          <ScrollThumb $h={630} />
          <ScrollFill />
        </ScrollTrack>
      </Body>
    </Page>
  );
}
